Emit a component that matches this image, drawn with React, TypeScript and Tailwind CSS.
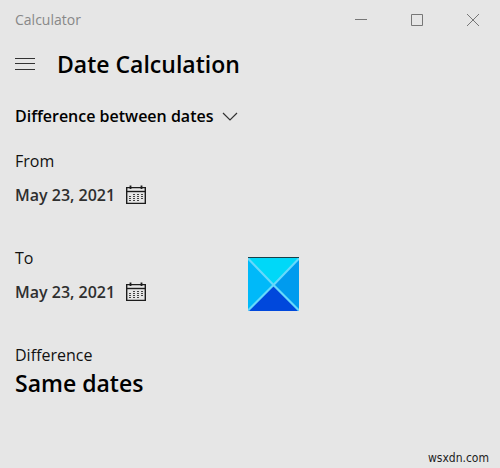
import React from 'react';

const CalendarIcon: React.FC = () => (
  <svg width="20" height="20" viewBox="0 0 20 20" fill="none" stroke="#1c1c1c" aria-hidden="true">
    <path d="M0.7 2.6H19.3V18.4H0.7Z" strokeWidth="1.4" />
    <path d="M1 6.5H19" strokeWidth="1.4" />
    <path d="M4.5 0.5V4M15.5 0.5V4" strokeWidth="1.8" />
    <path d="M7 9.5H9M11 9.5H13M15 9.5H17M3 11.5H5M7 11.5H9M11 11.5H13M15 11.5H17M3 13.5H5M7 13.5H9M11 13.5H13M15 13.5H17M3 15.5H5M7 15.5H9M11 15.5H13" stroke="#444444" />
  </svg>
);

const PyramidLogo: React.FC = () => (
  <svg width="51" height="54" viewBox="0 0 51 54" aria-hidden="true">
    <path d="M0 1H51L25.5 28Z" fill="#00d8f8" />
    <path d="M51 1V54L25.5 28Z" fill="#009bee" />
    <path d="M0 1V54L25.5 28Z" fill="#00b9f9" />
    <path d="M0 54H51L25.5 28Z" fill="#0048dc" />
    <path d="M0 1.5L25.5 28L51 1.5M0 53.5L25.5 28L51 53.5" fill="none" stroke="#66d9fb" strokeWidth="2.2" />
    <path d="M0 0.5H51" stroke="#17404a" strokeWidth="1.2" />
  </svg>
);

const windowControls = [
  { label: 'Minimize', d: 'M2 6.5H14' },
  { label: 'Maximize', d: 'M2.5 1.5H13.5V12.5H2.5Z' },
  { label: 'Close', d: 'M2 1L14 13M14 1L2 13' },
];

const DateField: React.FC<{ id: string; label: string; value: string }> = ({ id, label, value }) => (
  <div className="flex flex-col items-start gap-2">
    <label htmlFor={id} className="leading-6">{label}</label>
    <button id={id} type="button" className="flex items-center gap-[11px] leading-7 font-semibold text-[#2f2f2f]">
      <span>{value}</span>
      <CalendarIcon />
    </button>
  </div>
);

const App: React.FC = () => (
  <div className="relative flex min-h-screen flex-col bg-[#e6e6e6] font-['Open_Sans',sans-serif] text-base text-[#111111]">
    <header className="flex h-10 items-center justify-between pl-[15px]">
      <span className="text-sm text-[#888888]">Calculator</span>
      <div className="flex h-full">
        {windowControls.map((control) => (
          <button key={control.label} type="button" aria-label={control.label} className="flex w-14 items-center justify-center">
            <svg width="14" height="14" viewBox="0 0 14 14" fill="none" stroke="#777777" overflow="visible">
              <path d={control.d} />
            </svg>
          </button>
        ))}
      </div>
    </header>

    <main className="flex flex-1 flex-col items-start px-[15px]">
      <div className="flex h-12 items-center gap-[22px]">
        <button type="button" aria-label="Open navigation">
          <svg width="20" height="12" viewBox="0 0 20 12" fill="none" stroke="#333333">
            <path d="M0 0.5H20M0 5.5H20M0 11.5H20" />
          </svg>
        </button>
        <h1 className="text-[23px] font-semibold text-black">Date Calculation</h1>
      </div>

      <div className="relative mt-3 mb-[17px]">
        <select
          aria-label="Calculation mode"
          className="h-8 appearance-none bg-transparent pr-6 font-semibold text-black"
        >
          <option>Difference between dates</option>
        </select>
        <svg className="pointer-events-none absolute top-3 right-0" width="16" height="10" viewBox="0 0 16 10" fill="none" stroke="#333333" strokeWidth="1.2">
          <path d="M1 1L8 8L15 1" />
        </svg>
      </div>

      <div className="flex flex-col gap-[37px]">
        <DateField id="from-date" label="From" value="May 23, 2021" />
        <DateField id="to-date" label="To" value="May 23, 2021" />
        <div>
          <h2 className="leading-6">Difference</h2>
          <p className="text-[23px] leading-8 font-semibold text-black">Same dates</p>
        </div>
      </div>
    </main>

    <div className="absolute top-[257px] left-[248px]">
      <PyramidLogo />
    </div>

    <footer className="flex justify-end px-[11px] font-['DejaVu_Sans_Condensed','DejaVu_Sans',sans-serif] text-xs leading-5 text-[#222222]">
      wsxdn.com
    </footer>
  </div>
);

export default App;
